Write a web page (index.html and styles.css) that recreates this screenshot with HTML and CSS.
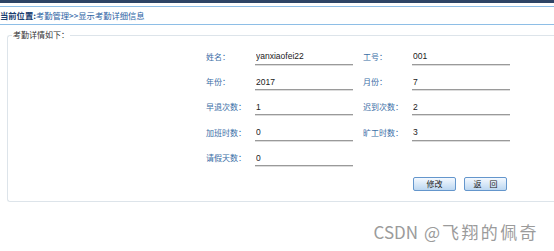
FILE: index.html
```html
<!DOCTYPE html>
<html lang="zh-CN">
<head>
<meta charset="utf-8">
<title>显示考勤详细信息</title>
<link rel="stylesheet" href="styles.css">
</head>
<body>
<div class="topbar"></div>
<div class="crumb"><span class="crumb-head">当前位置:</span><span class="crumb-path">考勤管理&gt;&gt;显示考勤详细信息</span></div>
<fieldset class="panel">
  <legend class="panel-title">考勤详情如下：</legend>
  <div class="form">
    <label class="lbl">姓名：</label><input class="val" type="text" value="yanxiaofei22" readonly>
    <label class="lbl">工号：</label><input class="val" type="text" value="001" readonly>
    <label class="lbl">年份：</label><input class="val" type="text" value="2017" readonly>
    <label class="lbl">月份：</label><input class="val" type="text" value="7" readonly>
    <label class="lbl">早退次数：</label><input class="val" type="text" value="1" readonly>
    <label class="lbl">迟到次数：</label><input class="val" type="text" value="2" readonly>
    <label class="lbl">加班时数：</label><input class="val" type="text" value="0" readonly>
    <label class="lbl">旷工时数：</label><input class="val" type="text" value="3" readonly>
    <label class="lbl">请假天数：</label><input class="val" type="text" value="0" readonly>
    <div class="actions">
      <button class="btn" type="button">修改</button>
      <button class="btn" type="button">返　回</button>
    </div>
  </div>
</fieldset>
<div class="watermark"><span class="wm-latin">CSDN @</span><span class="wm-cjk">飞翔的佩奇</span></div>
</body>
</html>
```
FILE: styles.css
```css
html, body {
  margin: 0;
  padding: 0;
  background: #ffffff;
}
body {
  position: relative;
  height: 251px;
  overflow: hidden;
  font-family: "Noto Sans CJK SC", "Liberation Sans", sans-serif;
}
.topbar {
  height: 3px;
  background: #2e4466;
}
.crumb {
  margin-top: 3px;
  height: 17px;
  border-top: 1px solid #8ebee6;
  border-bottom: 1px solid #8ebee6;
  display: flex;
  align-items: center;
  font-size: 8.3px;
  line-height: 17px;
}
.crumb-head {
  color: #1b3e70;
  font-weight: bold;
}
.crumb-path {
  color: #2a62a4;
}
.panel {
  margin: 4px 0 0 7px;
  padding: 0 0 5px 0;
  border: 1px solid #dde4ea;
  border-right: 0;
  border-radius: 3px 0 0 3px;
}
.panel-title {
  margin-left: 4px;
  padding: 0 1px;
  font-size: 8px;
  line-height: 12px;
  color: #333333;
}
.form {
  margin: 3px 0 0 198px;
  display: grid;
  grid-template-columns: 49px 108px 49px 99px;
  grid-auto-rows: 25.4px;
  align-items: center;
}
.lbl {
  font-size: 8px;
  color: #3a6ea6;
  line-height: 12px;
}
.val {
  box-sizing: border-box;
  width: 98px;
  height: 16px;
  margin: 0;
  padding: 0 1px;
  border: 0;
  border-bottom: 1px solid #9a9a9a;
  box-shadow: 0 1px 0 #dcdcdc;
  background: transparent;
  font-family: "Liberation Sans", Arial, sans-serif;
  font-size: 8.5px;
  color: #222222;
  outline: none;
}
.actions {
  grid-column: 4;
  grid-row: 6;
  align-self: start;
  margin-top: 6px;
  display: flex;
  gap: 8px;
  padding-left: 1px;
}
.btn {
  box-sizing: border-box;
  width: 43px;
  height: 14px;
  padding: 0;
  border: 1px solid #6496cc;
  border-radius: 2px;
  background: linear-gradient(#f4f9ff, #bcd7f1);
  font-family: "Noto Sans CJK SC", sans-serif;
  font-size: 8px;
  line-height: 12px;
  color: #222222;
}
.watermark {
  position: absolute;
  right: 15px;
  top: 220px;
  font-family: "Noto Sans CJK SC", "Liberation Sans", sans-serif;
  font-size: 17px;
  line-height: 24px;
  color: #9b9b9b;
  white-space: nowrap;
}
.wm-latin {
  word-spacing: 2px;
  margin-right: 2px;
}
.wm-cjk {
  letter-spacing: 2.4px;
}
```
